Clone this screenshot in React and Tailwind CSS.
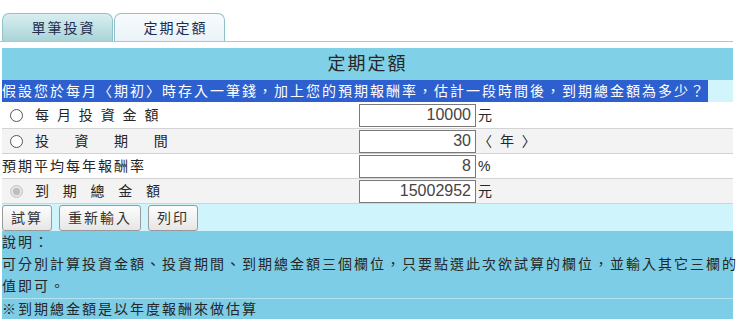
const CJK = "font-['Liberation_Sans','Noto_Sans_CJK_TC',sans-serif]";

function Tab({ label, active }) {
  return (
    <div
      className={`h-[28px] w-[111px] flex items-center justify-center rounded-t-[7px] border border-b-0 border-[#8fc3cb] text-[14px] tracking-[2px] text-[#1d2d4f] ${
        active
          ? "bg-gradient-to-b from-[#f7fbfd] to-[#eaf3f8]"
          : "bg-gradient-to-b from-[#d9eef0] to-[#a9d4d8]"
      }`}
    >
      <span className="pl-[12px]">{label}</span>
    </div>
  );
}

function Field({ label, value, unit, radio, disabled, shade, first }) {
  return (
    <div
      className={`flex items-center border-b border-[#d3d3d3] ${first ? "h-[27px]" : "h-[25px]"} ${
        shade ? "bg-[#f3f3f3]" : "bg-white"
      }`}
    >
      <div className="w-[355px] flex items-center whitespace-pre">
        {radio && (
          <span
            className={`w-[13px] h-[13px] ml-[8px] mr-[12px] rounded-full border shrink-0 ${
              disabled ? "border-[#c4c4c4] bg-[#e4e4e4] flex items-center justify-center" : "border-[#555] bg-white"
            }`}
          >
            {disabled && <span className="w-[7px] h-[7px] rounded-full bg-[#bdbdbd]" />}
          </span>
        )}
        <span>{label}</span>
      </div>
      <div className="ml-[2px] w-[117px] h-[23px] border border-[#7a7a7a] bg-white flex items-center justify-end pr-[4px] text-[16px] tracking-normal text-[#444] font-['Liberation_Sans',sans-serif]">
        {value}
      </div>
      <span className="ml-[2px] whitespace-pre">{unit}</span>
    </div>
  );
}

function Btn({ children }) {
  return (
    <button className="h-[26px] px-[8px] border border-[#9a9a9a] rounded-[3px] bg-gradient-to-b from-[#fdfdfd] to-[#e6e6e6] text-[14px] tracking-[2px] text-[#333] leading-none">
      {children}
    </button>
  );
}

export default function App() {
  return (
    <div className={`w-[740px] h-[329px] bg-white text-[#262626] text-[14px] tracking-[2px] leading-none ${CJK}`}>
      <div className="w-[733px] h-[42px] pt-[13px] pl-[2px] flex gap-[1px] border-b border-[#a3cbd6]">
        <Tab label="單筆投資" />
        <Tab label="定期定額" active />
      </div>

      <div className="mt-[6px] ml-[2px] w-[731px]">
        <div className="h-[32px] bg-[#80d0e8] flex items-center justify-center text-[18px] tracking-[2px]">
          定期定額
        </div>
        <div className="h-[22px] bg-[#d2f5fb] flex items-center">
          <span className="h-full flex items-center bg-[#2e5fce] text-white pr-[2px]">
            假設您於每月〈期初〉時存入一筆錢，加上您的預期報酬率，估計一段時間後，到期總金額為多少？
          </span>
        </div>

        <Field first radio label="每 月 投 資 金 額" value="10000" unit="元" />
        <Field radio shade label="投    資    期    間" value="30" unit="〈 年 〉" />
        <Field label="預期平均每年報酬率" value="8" unit="%" />
        <Field radio disabled shade label="到  期  總  金  額" value="15002952" unit="元" />

        <div className="h-[27px] bg-[#cff4fb] flex items-center gap-[7px]">
          <Btn>試算</Btn>
          <Btn>重新輸入</Btn>
          <Btn>列印</Btn>
        </div>

        <div className="bg-[#7ecde6] border-b border-[#b3e3f1] flex flex-col pt-[4px] pb-[5px] gap-[8px] leading-[14px]">
          <div>說明：</div>
          <div className="whitespace-nowrap">
            可分別計算投資金額、投資期間、到期總金額三個欄位，只要點選此次欲試算的欄位，並輸入其它三欄的
          </div>
          <div>值即可。</div>
        </div>
        <div className="h-[20px] bg-[#7ecde6] flex items-center">※到期總金額是以年度報酬來做估算</div>
      </div>
    </div>
  );
}
